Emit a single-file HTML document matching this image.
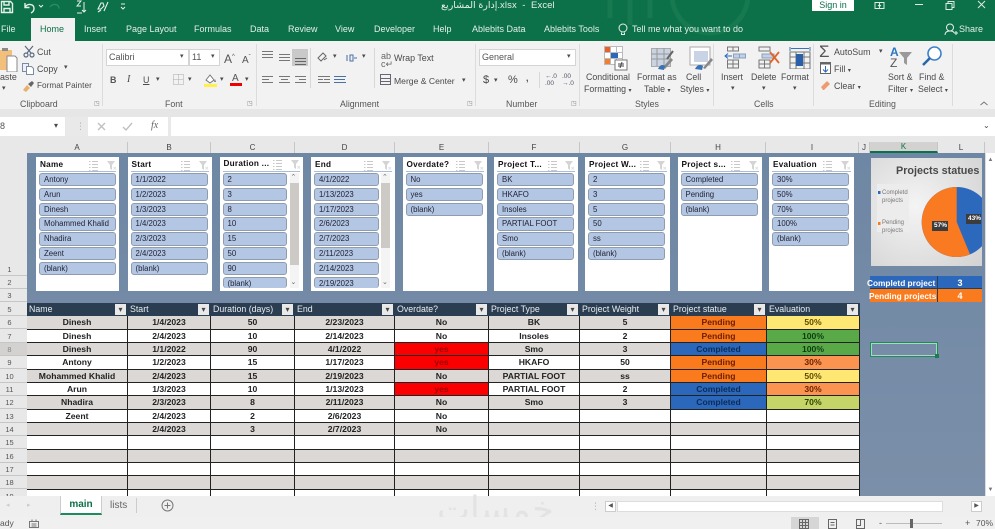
<!DOCTYPE html>
<html><head><meta charset="utf-8">
<style>
html,body{margin:0;padding:0;width:995px;height:529px;overflow:hidden;background:#f0f0f0}
body{position:relative;font-family:"Liberation Sans","DejaVu Sans",sans-serif;font-size:9px;color:#444}
.a{position:absolute;white-space:nowrap}
.t{position:absolute;white-space:nowrap;color:#4a4a4a;line-height:12px;font-size:8.900px}
.tab{position:absolute;top:23px;color:#e2efe9;font-size:9px;line-height:13px;white-space:nowrap}
.sep{position:absolute;top:44px;width:1px;height:62px;background:#dcdcdc}
.gl{position:absolute;top:98px;color:#555;font-size:8.800px;line-height:12px;white-space:nowrap}
.box{position:absolute;background:#fff;border:1px solid #d4d4d4;box-sizing:border-box}
.ch{position:absolute;top:142px;height:11px;font-size:8px;line-height:11px;color:#444;text-align:center;border-right:1px solid #c6c6c6;box-sizing:border-box}
.rh{position:absolute;left:0;width:27px;height:13px;font-size:7.500px;line-height:13px;text-align:center;color:#555;border-bottom:1px solid #c6c6c6;box-sizing:border-box;padding-right:8px}
.sl{position:absolute;top:157px;height:134px;background:#fff;box-sizing:border-box}
.sh{position:absolute;left:4px;top:2px;font-weight:bold;font-size:8.200px;letter-spacing:.25px;color:#111;line-height:12px;white-space:nowrap}
.sl:before{content:"";position:absolute;left:3px;right:3px;top:14px;height:1px;background:#a9bdd6}
.si{position:absolute;left:3px;height:13.400px;background:#b3c7e4;border:1px solid #8f9cad;border-radius:3px;box-sizing:border-box;font-size:7.800px;line-height:12px;color:#223;padding-left:4px;white-space:nowrap;overflow:hidden}
.ic{position:absolute;top:3px}
#g{position:absolute;left:27px;top:303px;display:grid;grid-template-columns:101px 83px 84px 100px 94px 91px 91px 96px 93px;grid-auto-rows:13.330px;width:833px;height:193px;overflow:hidden}
#g div{box-sizing:border-box;border-right:1px solid #222;border-bottom:1px solid #222;text-align:center;font-weight:bold;font-size:8.600px;line-height:12.500px;color:#222;background:#fff;overflow:hidden;white-space:nowrap}
#g .h{background:#2b3d50;color:#e8edf2;text-align:left;padding-left:2px;position:relative;border-right:1px solid #2b3d50;border-bottom:0;font-size:8.800px;font-weight:normal}
#g .h:after{content:"▾";position:absolute;right:1px;top:1px;width:11px;height:11px;background:#e9e9e9;color:#444;font-size:8px;line-height:11px;text-align:center}
#g .g{background:#dbd8d5}
#g .rd{background:#fb0000;color:#9c0000}
#g .p{background:#fa7a1e;color:#6a1d00}
#g .c{background:#2b67bb;color:#0c2c55}
#g .e5{background:#fee873;color:#5e4a00}
#g .e1{background:#5aa949;color:#0d3d0d}
#g .e3{background:#fb9450;color:#6b2200}
#g .e7{background:#c5d567;color:#2e4400}
</style></head><body>
<svg width="0" height="0" style="position:absolute"><defs>
<g id="li" fill="none" stroke="#c8c8c8" stroke-width="1"><path d="M4 1.500h6M4 4.500h6M4 7.500h6M4 10.500h6M1 1.500h1.500M1 4.500h1.500M1 7.500h1.500M1 10.500h1.500"/></g>
<g id="fu"><path d="M1 1h8L6 5v5L4 8.500V5Z" fill="#d4d4d4"/><path d="M7.500 7l2.500 2.500M10 7l-2.500 2.500" stroke="#e2e2e2"/></g>
</defs></svg>

<!-- Title bar -->
<div class="a" style="left:0;top:0;width:995px;height:41px;background:#0c7049"></div>
<svg class="a" style="left:590px;top:0" width="210" height="41"><g fill="none" stroke="#16794f" stroke-width="5"><circle cx="120" cy="-5" r="38"/><path d="M20 0v18M40 0v25M60 0v18"/></g></svg>
<svg class="a" style="left:0;top:0" width="135" height="16" fill="none" stroke="#e6f0eb" stroke-width="1.400"><path d="M1.500 1.500h9l2 2v9h-11zM4 1.500v3.500h5v-3.500M4 12.500v-4h6v4"/><path d="M25 7c3-4 9-3 9 1.500 0 2-1 3.500-3 4.500M25 3v4.500h4.500"/><path d="M39 5l2 2 2-2" stroke-width="1"/><path d="M50 7c3-4 9-3 9 1.500" stroke="#2f8a66"/><path d="M77 1h4l-4 5h4M77 13h5" stroke-width="1"/><path d="M84 2v10M82 10l2 2 2-2" stroke-width="1"/><path d="M98 9l3-6h2l1 3-3 3zM98 12l3-2M108 2l-4 9" stroke-width="1.100"/><path d="M121 4h4M121 7l2 2 2-2" stroke-width="1"/></svg>
<div class="a" style="left:441px;top:0;color:#e6f0eb;font-size:9.500px;line-height:11px;letter-spacing:.1px">إدارة المشاريع.xlsx &nbsp;-&nbsp; Excel</div>
<div class="a" style="left:812px;top:0;width:42px;height:11px;background:#fff;color:#0c7049;font-size:9px;line-height:10px;text-align:center">Sign in</div>
<svg class="a" style="left:870px;top:0" width="125" height="12" fill="none" stroke="#dcebe4"><path d="M5 2.500h9v6h-9zM9.500 2.500v6M8 5l1.500 1.500L11 5"/><path d="M45 4.500h8"/><path d="M76 3.500h6v6h-6zM78 3.500v-2h6v6h-2"/><path d="M108 1l7 7M115 1l-7 7"/></svg>

<!-- Tabs -->
<div class="a" style="left:31px;top:18px;width:44px;height:24px;background:#f1f1f1"></div>
<div class="tab" style="left:1px">File</div>
<div class="tab" style="left:40px;color:#0c7049">Home</div>
<div class="tab" style="left:84px">Insert</div>
<div class="tab" style="left:126px">Page Layout</div>
<div class="tab" style="left:194px">Formulas</div>
<div class="tab" style="left:250px">Data</div>
<div class="tab" style="left:288px">Review</div>
<div class="tab" style="left:335px">View</div>
<div class="tab" style="left:374px">Developer</div>
<div class="tab" style="left:433px">Help</div>
<div class="tab" style="left:472px">Ablebits Data</div>
<div class="tab" style="left:544px">Ablebits Tools</div>
<svg class="a" style="left:617px;top:23px" width="12" height="13" fill="none" stroke="#e6f0eb"><circle cx="6" cy="5" r="4"/><path d="M4.500 9.500v2h3v-2"/></svg>
<div class="tab" style="left:632px">Tell me what you want to do</div>
<svg class="a" style="left:944px;top:23px" width="14" height="13" fill="none" stroke="#e6f0eb"><circle cx="6" cy="4.500" r="3.500"/><path d="M1 12c0-3 2-4 5-4s4 1 4 2M10 10h4M12 8v4"/></svg>
<div class="tab" style="left:959px">Share</div>

<!-- Ribbon -->
<div class="a" style="left:0;top:41px;width:995px;height:68px;background:#f2f2f2"></div>
<div class="a" style="left:0;top:109px;width:995px;height:8px;background:#e6e6e6"></div>
<div class="sep" style="left:102px"></div><div class="sep" style="left:256px"></div><div class="sep" style="left:475px"></div><div class="sep" style="left:579px"></div><div class="sep" style="left:713px"></div><div class="sep" style="left:813px"></div><div class="sep" style="left:952px"></div>

<!-- Clipboard -->
<svg class="a" style="left:0;top:46px" width="18" height="26"><path d="M0 4h12v20H0z" fill="#f3c07c"/><path d="M7 10h8l2 2v14H7z" fill="#fff" stroke="#888"/><path d="M2 2h6v3H2z" fill="#8a8a8a"/></svg>
<div class="t" style="left:0;top:71px">aste</div><div class="t" style="left:2px;top:83px;font-size:7px">▾</div>
<svg class="a" style="left:23px;top:45px" width="12" height="13" fill="none" stroke="#5a6a80" stroke-width="1.200"><path d="M2 1l6 7M10 1L4 8"/><circle cx="3" cy="10" r="2"/><circle cx="9" cy="10" r="2"/></svg>
<div class="t" style="left:37px;top:46px">Cut</div>
<svg class="a" style="left:22px;top:63px" width="13" height="12" fill="#eef" stroke="#7b8ba0"><path d="M.5.500h6v8h-6z"/><path d="M4.500 3.500h5l2 2v6h-7z" fill="#fff"/></svg>
<div class="t" style="left:37px;top:63px">Copy</div><div class="t" style="left:64px;top:62px;font-size:7px">▾</div>
<svg class="a" style="left:22px;top:80px" width="13" height="12"><path d="M1 10l4-5 3 3-4 4z" fill="#e8b06a"/><path d="M6 4l4-3 2 2-3 4z" fill="#666"/></svg>
<div class="t" style="left:37px;top:80px;font-size:8.200px;letter-spacing:.05px">Format Painter</div>
<div class="gl" style="left:20px">Clipboard</div>

<!-- Font -->
<div class="box" style="left:106px;top:49px;width:83px;height:17px;padding-left:2px;line-height:15px;font-size:9px;color:#555">Calibri</div><div class="t" style="left:180px;top:51px;font-size:7px">▾</div>
<div class="box" style="left:189px;top:49px;width:31px;height:17px;padding-left:2px;line-height:15px;font-size:9px;color:#555">11</div><div class="t" style="left:211px;top:51px;font-size:7px">▾</div>
<div class="t" style="left:224px;top:51px;font-size:12px;color:#555">A<span style="font-size:6px;vertical-align:5px">^</span></div>
<div class="t" style="left:242px;top:52px;font-size:10px;color:#555">A<span style="font-size:6px;vertical-align:4px">ˇ</span></div>
<div class="t" style="left:110px;top:74px;font-weight:bold;color:#555">B</div>
<div class="t" style="left:127px;top:74px;font-style:italic;font-family:'Liberation Serif',serif;font-size:10px">I</div>
<div class="t" style="left:143px;top:74px;text-decoration:underline">U</div><div class="t" style="left:156px;top:74px;font-size:7px">▾</div>
<svg class="a" style="left:173px;top:74px" width="12" height="12" fill="none" stroke="#aaa" stroke-dasharray="1 1"><path d="M.5.500h10v10H.500zM5.500.500v10M.5 5.500h10"/></svg><div class="t" style="left:188px;top:74px;font-size:7px">▾</div>
<svg class="a" style="left:203px;top:73px" width="15" height="15"><path d="M3 7l4-5 4 5-4 3z" fill="#fff" stroke="#777"/><path d="M12 6l1 3h-2z" fill="#777"/><rect x="1" y="11" width="13" height="3" fill="#fff04a"/></svg><div class="t" style="left:220px;top:74px;font-size:7px">▾</div>
<div class="t" style="left:232px;top:73px;font-size:10px;color:#555">A</div><div class="a" style="left:230px;top:83px;width:12px;height:3px;background:#ee0000"></div><div class="t" style="left:245px;top:74px;font-size:7px">▾</div>
<div class="gl" style="left:165px">Font</div>
<div class="t" style="left:94px;top:98px;font-size:6px;color:#888">◳</div><div class="t" style="left:247px;top:98px;font-size:6px;color:#888">◳</div><div class="t" style="left:467px;top:98px;font-size:6px;color:#888">◳</div><div class="t" style="left:571px;top:98px;font-size:6px;color:#888">◳</div>

<!-- Alignment -->
<div class="a" style="left:292px;top:49px;width:16px;height:17px;background:#c9c9c9"></div>
<svg class="a" style="left:262px;top:50px" width="112" height="36" fill="none" stroke="#777"><path d="M0 1.500h11M0 4.500h11M0 7.500h11"/><path d="M17 4.500h11M17 7.500h11M17 10.500h11"/><path d="M33 8.500h11M33 11.500h11M33 14.500h11" stroke="#666"/><path d="M56 8l5-5 3 3-5 5zM62 10l3-2" stroke="#666"/><path d="M88 5h3v6h-3zM85 5v6M92 8h3" stroke="#4a6fa0"/><path d="M0 26.500h11M0 29.500h7M0 32.500h11"/><path d="M17 26.500h11M19 29.500h7M17 32.500h11"/><path d="M33 26.500h11M37 29.500h7M33 32.500h11"/><path d="M56 26.500h12M62 29.500h6M56 32.500h12M61 29.500h-5"/><path d="M72 26.500h12M72 32.500h12M72 29.500h6M78 29.500h5" stroke="#4a6fa0"/></svg>
<div class="t" style="left:333px;top:51px;font-size:7px">▾</div><div class="t" style="left:362px;top:51px;font-size:7px">▾</div>
<div class="a" style="left:310px;top:48px;width:1px;height:40px;background:#d8d8d8"></div><div class="a" style="left:374px;top:48px;width:1px;height:40px;background:#d8d8d8"></div>
<div class="t" style="left:381px;top:52px;font-size:9px;color:#666;line-height:8px">ab<br>c↵</div>
<div class="t" style="left:394px;top:52px">Wrap Text</div>
<svg class="a" style="left:380px;top:74px" width="12" height="12" fill="none" stroke="#667"><path d="M.5.500h10v10H.500zM.5 4.500h10M.5 7.500h10"/></svg>
<div class="t" style="left:394px;top:75px;font-size:8.600px">Merge &amp; Center</div><div class="t" style="left:462px;top:75px;font-size:7px">▾</div>
<div class="gl" style="left:340px">Alignment</div>

<!-- Number -->
<div class="box" style="left:479px;top:49px;width:97px;height:17px;padding-left:2px;line-height:15px;font-size:9px;color:#555">General</div><div class="t" style="left:567px;top:51px;font-size:7px">▾</div>
<div class="t" style="left:483px;top:74px;font-size:11px">$</div><div class="t" style="left:494px;top:75px;font-size:7px">▾</div>
<div class="t" style="left:508px;top:74px;font-size:11px">%</div><div class="t" style="left:526px;top:72px;font-weight:bold">,</div>
<div class="a" style="left:539px;top:72px;width:1px;height:16px;background:#d8d8d8"></div>
<div class="t" style="left:545px;top:74px;font-size:6.500px;line-height:6.500px;color:#556">←.0<br>.00</div><div class="t" style="left:562px;top:74px;font-size:6.500px;line-height:6.500px;color:#556">.00<br>→.0</div>
<div class="gl" style="left:506px">Number</div>

<!-- Styles -->
<svg class="a" style="left:598px;top:45px" width="118" height="27"><g fill="#fff" stroke="#bbb"><path d="M6.500 1.500h18v18h-18z"/><path d="M6.500 7.500h18M6.500 13.500h18M12.500 1.500v18M18.500 1.500v18" fill="none"/></g><path d="M7 2h5v5H7z" fill="#e5622a"/><path d="M13 8h7v5h-7z" fill="#2b67bb"/><path d="M7 14h5v5H7z" fill="#f08030"/><rect x="17" y="15" width="12" height="10" fill="#fff" stroke="#777"/><path d="M20 19h6M20 21h6M24 17l-2 6" stroke="#444" fill="none"/><g fill="#c9d3e2" stroke="#aaa"><path d="M53.500 3.500h19v18h-19z"/></g><path d="M53 9h19M53 14h19M59 3v18M66 3v18" stroke="#999" fill="none"/><path d="M65 22l8-9 2 2-8 9z" fill="#888"/><path d="M60 24c2-4 4-5 7-3l-1 4z" fill="#3a72b8"/><path d="M75 6l-6 8" stroke="#666" stroke-width="2"/><rect x="92" y="2" width="20" height="18" fill="#fff" stroke="#aaa"/><rect x="96" y="6" width="14" height="11" fill="#c8d3e6"/><path d="M105 23l8-10 2 2-8 9z" fill="#888"/><path d="M97 24c2-4 5-5 8-3l-1 4z" fill="#3a72b8"/></svg>
<div class="t" style="left:586px;top:71px;font-size:8.800px">Conditional</div><div class="t" style="left:584px;top:83px;font-size:8.800px">Formatting <span style="font-size:6px">▾</span></div>
<div class="t" style="left:637px;top:71px;font-size:8.800px">Format as</div><div class="t" style="left:644px;top:83px;font-size:8.800px">Table <span style="font-size:6px">▾</span></div>
<div class="t" style="left:686px;top:71px;font-size:8.800px">Cell</div><div class="t" style="left:680px;top:83px;font-size:8.800px">Styles <span style="font-size:6px">▾</span></div>
<div class="gl" style="left:635px">Styles</div>

<!-- Cells -->
<svg class="a" style="left:720px;top:45px" width="92" height="24" fill="none" stroke="#777"><path d="M7.500 2h11v4h-11zM13 2v4M7.500 15h11v8h-11zM13 15v8M7.500 19h11"/><path d="M13.500 9h12v4h-12zM19.500 9v4" stroke="#8aa0bf" fill="#c4d1e5"/><path d="M12 11H5M8 8.500 5 11l3 2.500" stroke="#2b67bb"/><path d="M39 2h11v4H39zM39 15h11v8H39zM44.500 15v8M39 19h11"/><path d="M42 9h12v4H42z" fill="#c4d1e5" stroke="#8aa0bf"/><path d="M50 7l9 11M59 7l-9 11" stroke="#e0662a" stroke-width="1.800"/><path d="M70 7h20v17H70zM70 12h20M70 18h20M76 7v17M84 7v17"/><path d="M76 9h7v12h-7z" fill="#2b5fa8" stroke="none"/><path d="M70 2v4M90 2v4M71 3.500h18" stroke="#3a72b8"/></svg>
<div class="t" style="left:721px;top:71px;font-size:8.800px">Insert</div><div class="t" style="left:731px;top:83px;font-size:7px">▾</div>
<div class="t" style="left:751px;top:71px;font-size:8.800px">Delete</div><div class="t" style="left:762px;top:83px;font-size:7px">▾</div>
<div class="t" style="left:781px;top:71px;font-size:8.800px">Format</div><div class="t" style="left:793px;top:83px;font-size:7px">▾</div>
<div class="gl" style="left:754px">Cells</div>

<!-- Editing -->
<div class="t" style="left:819px;top:43px;font-size:17px;line-height:18px;color:#555">Σ</div>
<div class="t" style="left:834px;top:46px">AutoSum</div><div class="t" style="left:879px;top:46px;font-size:7px">▾</div>
<svg class="a" style="left:820px;top:62px" width="12" height="13"><rect x=".5" y=".5" width="10" height="11" fill="#fff" stroke="#666"/><path d="M.5.500h10v2h-10z" fill="#666"/><path d="M5.500 4v6M3 7.500l2.500 2.500L8 7.500" stroke="#2b67bb" fill="none"/></svg>
<div class="t" style="left:834px;top:63px">Fill <span style="font-size:6px">▾</span></div>
<svg class="a" style="left:820px;top:79px" width="12" height="12"><path d="M1 8l6-6 3 3-6 6H3z" fill="#f09a70"/></svg>
<div class="t" style="left:834px;top:80px">Clear <span style="font-size:6px">▾</span></div>
<div class="t" style="left:890px;top:46px;font-size:12px;color:#2b77c0;font-weight:bold">A</div><div class="t" style="left:890px;top:57px;font-size:12px;color:#555">Z</div>
<svg class="a" style="left:899px;top:52px" width="14" height="14"><path d="M0 0h13L8 6v7L5 11V6z" fill="#999"/></svg>
<svg class="a" style="left:921px;top:45px" width="22" height="22" fill="none"><circle cx="13.500" cy="8.500" r="6.500" stroke="#3a80c8" stroke-width="1.600" fill="#fff"/><path d="M9 13l-7 7" stroke="#2b67a8" stroke-width="2.600"/></svg>
<div class="t" style="left:888px;top:71px;font-size:8.800px">Sort &amp;</div><div class="t" style="left:888px;top:83px;font-size:8.800px">Filter <span style="font-size:6px">▾</span></div>
<div class="t" style="left:919px;top:71px;font-size:8.800px">Find &amp;</div><div class="t" style="left:918px;top:83px;font-size:8.800px">Select <span style="font-size:6px">▾</span></div>
<div class="gl" style="left:869px">Editing</div>
<svg class="a" style="left:979px;top:100px" width="10" height="6" fill="none" stroke="#777"><path d="M1.500 5l3.500-3 3.500 3"/></svg>

<!-- Formula bar -->
<div class="a" style="left:0;top:117px;width:995px;height:19px;background:#e9e9e9"></div>
<div class="box" style="left:0;top:117px;width:65px;height:19px;border:0;color:#555;line-height:19px;font-size:9px">8</div><div class="t" style="left:54px;top:120px;font-size:8px">▾</div>
<div class="t" style="left:76px;top:120px;color:#aaa">⋮</div>
<div class="box" style="left:88px;top:117px;width:80px;height:19px;border:0"></div>
<svg class="a" style="left:95px;top:121px" width="40" height="11" fill="none" stroke="#c0c0c0" stroke-width="1.400"><path d="M3 2l7 7M10 2l-7 7M28 6l3 3 6-7"/></svg>
<div class="t" style="left:151px;top:120px;font-style:italic;font-family:'Liberation Serif',serif;font-size:10px;color:#666">fx</div>
<div class="box" style="left:171px;top:117px;width:824px;height:19px;border:0"></div>
<div class="t" style="left:983px;top:120px;font-size:8px">⌄</div>

<!-- Column headers -->
<div class="a" style="left:0;top:136px;width:995px;height:17px;background:#e8e8e8"></div>
<div class="ch" style="left:27px;width:101px">A</div><div class="ch" style="left:128px;width:83px">B</div><div class="ch" style="left:211px;width:84px">C</div><div class="ch" style="left:295px;width:100px">D</div><div class="ch" style="left:395px;width:94px">E</div><div class="ch" style="left:489px;width:91px">F</div><div class="ch" style="left:580px;width:91px">G</div><div class="ch" style="left:671px;width:95px">H</div><div class="ch" style="left:766px;width:93px">I</div><div class="ch" style="left:859px;width:11px">J</div>
<div class="ch" style="left:870px;width:68px;background:#d4d2d0;border-bottom:2px solid #0c7049;color:#0c7049;height:11px;line-height:9px">K</div><div class="ch" style="left:938px;width:47px">L</div>

<!-- Row headers -->
<div class="a" style="left:0;top:153px;width:27px;height:343px;background:#e8e8e8"></div>
<div class="rh" style="top:263px">1</div><div class="rh" style="top:276px">2</div><div class="rh" style="top:289px">3</div><div class="rh" style="top:303px">5</div>
<div class="rh" style="top:316px">6</div><div class="rh" style="top:329.500px">7</div><div class="rh" style="top:343px;background:#d4d2d0;color:#888">8</div><div class="rh" style="top:356px">9</div><div class="rh" style="top:369.500px">10</div><div class="rh" style="top:383px">11</div><div class="rh" style="top:396px">12</div><div class="rh" style="top:409.500px">13</div><div class="rh" style="top:423px">14</div><div class="rh" style="top:436px">15</div><div class="rh" style="top:449.500px">16</div><div class="rh" style="top:463px">17</div><div class="rh" style="top:476px">18</div><div class="rh" style="top:489.500px;height:7px">19</div>

<!-- Sheet bg -->
<div class="a" style="left:27px;top:153px;width:958px;height:343px;background:linear-gradient(#6e87a4,#7b8fa9)"></div>

<!-- Slicers -->
<div class="sl" style="left:36px;width:83px"><div class="sh">Name</div><svg class="ic" style="left:52px" width="13" height="12"><use href="#li"/></svg><svg class="ic" style="left:70px" width="12" height="12"><use href="#fu"/></svg>
<div class="si" style="top:16px;width:77px">Antony</div><div class="si" style="top:30.800px;width:77px">Arun</div><div class="si" style="top:45.600px;width:77px">Dinesh</div><div class="si" style="top:60.400px;width:77px">Mohammed Khalid</div><div class="si" style="top:75.200px;width:77px">Nhadira</div><div class="si" style="top:90px;width:77px">Zeent</div><div class="si" style="top:104.800px;width:77px">(blank)</div></div>

<div class="sl" style="left:127.500px;width:84px"><div class="sh">Start</div><svg class="ic" style="left:52px" width="13" height="12"><use href="#li"/></svg><svg class="ic" style="left:70px" width="12" height="12"><use href="#fu"/></svg>
<div class="si" style="top:16px;width:77px">1/1/2022</div><div class="si" style="top:30.800px;width:77px">1/2/2023</div><div class="si" style="top:45.600px;width:77px">1/3/2023</div><div class="si" style="top:60.400px;width:77px">1/4/2023</div><div class="si" style="top:75.200px;width:77px">2/3/2023</div><div class="si" style="top:90px;width:77px">2/4/2023</div><div class="si" style="top:104.800px;width:77px">(blank)</div></div>

<div class="sl" style="left:219.500px;width:83px"><div class="sh" style="top:1px">Duration ...</div><svg class="ic" style="left:52px;top:2px" width="13" height="12"><use href="#li"/></svg><svg class="ic" style="left:70px;top:2px" width="12" height="12"><use href="#fu"/></svg>
<div class="si" style="top:16px;width:64px">2</div><div class="si" style="top:30.800px;width:64px">3</div><div class="si" style="top:45.600px;width:64px">8</div><div class="si" style="top:60.400px;width:64px">10</div><div class="si" style="top:75.200px;width:64px">15</div><div class="si" style="top:90px;width:64px">50</div><div class="si" style="top:104.800px;width:64px">90</div><div class="si" style="top:119.600px;width:64px;height:11.400px;border-bottom:0">(blank)</div>
<div class="a" style="left:70px;top:16px;width:9px;height:115px;background:#f4f4f4"></div><div class="a" style="left:70px;top:26px;width:9px;height:82px;background:#cdcac5"></div><div class="a" style="left:71px;top:16px;font-size:7px;color:#666;line-height:9px">⌃</div><div class="a" style="left:71px;top:121px;font-size:7px;color:#666;line-height:9px">⌄</div></div>

<div class="sl" style="left:311px;width:84px"><div class="sh">End</div><svg class="ic" style="left:52px" width="13" height="12"><use href="#li"/></svg><svg class="ic" style="left:70px" width="12" height="12"><use href="#fu"/></svg>
<div class="si" style="top:16px;width:65px">4/1/2022</div><div class="si" style="top:30.800px;width:65px">1/13/2023</div><div class="si" style="top:45.600px;width:65px">1/17/2023</div><div class="si" style="top:60.400px;width:65px">2/6/2023</div><div class="si" style="top:75.200px;width:65px">2/7/2023</div><div class="si" style="top:90px;width:65px">2/11/2023</div><div class="si" style="top:104.800px;width:65px">2/14/2023</div><div class="si" style="top:119.600px;width:65px;height:11.400px;border-bottom:0">2/19/2023</div>
<div class="a" style="left:70px;top:16px;width:9px;height:115px;background:#f4f4f4"></div><div class="a" style="left:70px;top:26px;width:9px;height:65px;background:#cdcac5"></div><div class="a" style="left:71px;top:16px;font-size:7px;color:#666;line-height:9px">⌃</div><div class="a" style="left:71px;top:121px;font-size:7px;color:#666;line-height:9px">⌄</div></div>

<div class="sl" style="left:402.500px;width:84px"><div class="sh">Overdate?</div><svg class="ic" style="left:52px" width="13" height="12"><use href="#li"/></svg><svg class="ic" style="left:70px" width="12" height="12"><use href="#fu"/></svg>
<div class="si" style="top:16px;width:77px">No</div><div class="si" style="top:30.800px;width:77px">yes</div><div class="si" style="top:45.600px;width:77px">(blank)</div></div>

<div class="sl" style="left:494px;width:84px"><div class="sh">Project T...</div><svg class="ic" style="left:53px" width="13" height="12"><use href="#li"/></svg><svg class="ic" style="left:70px" width="12" height="12"><use href="#fu"/></svg>
<div class="si" style="top:16px;width:77px">BK</div><div class="si" style="top:30.800px;width:77px">HKAFO</div><div class="si" style="top:45.600px;width:77px">Insoles</div><div class="si" style="top:60.400px;width:77px">PARTIAL FOOT</div><div class="si" style="top:75.200px;width:77px">Smo</div><div class="si" style="top:90px;width:77px">(blank)</div></div>

<div class="sl" style="left:585px;width:85px"><div class="sh">Project W...</div><svg class="ic" style="left:54px" width="13" height="12"><use href="#li"/></svg><svg class="ic" style="left:71px" width="12" height="12"><use href="#fu"/></svg>
<div class="si" style="top:16px;width:77px">2</div><div class="si" style="top:30.800px;width:77px">3</div><div class="si" style="top:45.600px;width:77px">5</div><div class="si" style="top:60.400px;width:77px">50</div><div class="si" style="top:75.200px;width:77px">ss</div><div class="si" style="top:90px;width:77px">(blank)</div></div>

<div class="sl" style="left:677.500px;width:84px"><div class="sh">Project s...</div><svg class="ic" style="left:52px" width="13" height="12"><use href="#li"/></svg><svg class="ic" style="left:70px" width="12" height="12"><use href="#fu"/></svg>
<div class="si" style="top:16px;width:77px">Completed</div><div class="si" style="top:30.800px;width:77px">Pending</div><div class="si" style="top:45.600px;width:77px">(blank)</div></div>

<div class="sl" style="left:769px;width:85px"><div class="sh">Evaluation</div><svg class="ic" style="left:53px" width="13" height="12"><use href="#li"/></svg><svg class="ic" style="left:71px" width="12" height="12"><use href="#fu"/></svg>
<div class="si" style="top:16px;width:77px">30%</div><div class="si" style="top:30.800px;width:77px">50%</div><div class="si" style="top:45.600px;width:77px">70%</div><div class="si" style="top:60.400px;width:77px">100%</div><div class="si" style="top:75.200px;width:77px">(blank)</div></div>

<!-- Chart -->
<div class="a" style="left:871px;top:158px;width:111px;height:108px;overflow:hidden;background:radial-gradient(circle at 40% 45%,#f4f4f4,#d2d2d2)">
<div class="a" style="left:25px;top:6px;font-weight:bold;font-size:10.800px;color:#4a4a4a;line-height:15px">Projects statues</div>
<svg class="a" style="left:0;top:0" width="111" height="108"><rect x="6" y="26" width="32" height="48" fill="#ececec"/><circle cx="85.700" cy="64" r="35" fill="#2c68bc"/><path d="M85.700 64 L85.700 29 A35 35 0 1 0 99 96.400 Z" fill="#f97a20"/><rect x="61" y="63" width="16" height="10" fill="#3c3c3c"/><rect x="95" y="56" width="15" height="10" fill="#3c3c3c"/><rect x="7" y="33" width="2.500" height="3" fill="#2c68bc"/><rect x="7" y="64" width="2.500" height="3" fill="#f97a20"/></svg>
<div class="a" style="left:63px;top:63px;color:#fff;font-size:6.500px;font-weight:bold;line-height:10px">57%</div>
<div class="a" style="left:97px;top:56px;color:#fff;font-size:6.500px;font-weight:bold;line-height:10px">43%</div>
<div class="a" style="left:11px;top:31px;font-size:6px;line-height:8px;color:#777">Completd<br>projects</div>
<div class="a" style="left:11px;top:61px;font-size:6px;line-height:8px;color:#777">Pending<br>projects</div>
</div>

<!-- Mini table -->
<div class="a" style="left:870px;top:276px;width:112px;height:13px;background:#2b67bb;border-bottom:1px solid #2b3d50;box-sizing:border-box"></div>
<div class="a" style="left:870px;top:289px;width:112px;height:13px;background:#fa7a1e"></div>
<div class="a" style="left:937px;top:276px;width:1px;height:26px;background:#2b3d50"></div>
<div class="a" style="left:867px;top:277px;width:70px;overflow:hidden;color:#fff;font-weight:bold;font-size:8.300px;line-height:12px">Completd project</div>
<div class="a" style="left:869px;top:290px;width:68px;overflow:hidden;color:#fff;font-weight:bold;font-size:8.300px;line-height:12px">Pending projects</div>
<div class="a" style="left:938px;top:277px;width:44px;text-align:center;color:#fff;font-weight:bold;font-size:9px;line-height:12px">3</div>
<div class="a" style="left:938px;top:290px;width:44px;text-align:center;color:#fff;font-weight:bold;font-size:9px;line-height:12px">4</div>

<!-- Data table -->
<div id="g">
<div class="h">Name</div><div class="h">Start</div><div class="h">Duration (days)</div><div class="h">End</div><div class="h">Overdate?</div><div class="h">Project Type</div><div class="h">Project Weight</div><div class="h">Project statue</div><div class="h">Evaluation</div>
<div class="g">Dinesh</div><div class="g">1/4/2023</div><div class="g">50</div><div class="g">2/23/2023</div><div class="g">No</div><div class="g">BK</div><div class="g">5</div><div class="p">Pending</div><div class="e5">50%</div>
<div>Dinesh</div><div>2/4/2023</div><div>10</div><div>2/14/2023</div><div>No</div><div>Insoles</div><div>2</div><div class="p">Pending</div><div class="e1">100%</div>
<div class="g">Dinesh</div><div class="g">1/1/2022</div><div class="g">90</div><div class="g">4/1/2022</div><div class="rd">yes</div><div class="g">Smo</div><div class="g">3</div><div class="c">Completed</div><div class="e1">100%</div>
<div>Antony</div><div>1/2/2023</div><div>15</div><div>1/17/2023</div><div class="rd">yes</div><div>HKAFO</div><div>50</div><div class="p">Pending</div><div class="e3">30%</div>
<div class="g">Mohammed Khalid</div><div class="g">2/4/2023</div><div class="g">15</div><div class="g">2/19/2023</div><div class="g">No</div><div class="g">PARTIAL FOOT</div><div class="g">ss</div><div class="p">Pending</div><div class="e5">50%</div>
<div>Arun</div><div>1/3/2023</div><div>10</div><div>1/13/2023</div><div class="rd">yes</div><div>PARTIAL FOOT</div><div>2</div><div class="c">Completed</div><div class="e3">30%</div>
<div class="g">Nhadira</div><div class="g">2/3/2023</div><div class="g">8</div><div class="g">2/11/2023</div><div class="g">No</div><div class="g">Smo</div><div class="g">3</div><div class="c">Completed</div><div class="e7">70%</div>
<div>Zeent</div><div>2/4/2023</div><div>2</div><div>2/6/2023</div><div>No</div><div></div><div></div><div></div><div></div>
<div class="g"></div><div class="g">2/4/2023</div><div class="g">3</div><div class="g">2/7/2023</div><div class="g">No</div><div class="g"></div><div class="g"></div><div class="g"></div><div class="g"></div>
<div></div><div></div><div></div><div></div><div></div><div></div><div></div><div></div><div></div>
<div class="g"></div><div class="g"></div><div class="g"></div><div class="g"></div><div class="g"></div><div class="g"></div><div class="g"></div><div class="g"></div><div class="g"></div>
<div></div><div></div><div></div><div></div><div></div><div></div><div></div><div></div><div></div>
<div class="g"></div><div class="g"></div><div class="g"></div><div class="g"></div><div class="g"></div><div class="g"></div><div class="g"></div><div class="g"></div><div class="g"></div>
<div></div><div></div><div></div><div></div><div></div><div></div><div></div><div></div><div></div>
</div>

<!-- Selected cell -->
<div class="a" style="left:870px;top:342px;width:68px;height:15px;border:1px solid #1f8a5c;box-shadow:inset 0 0 0 1px #a8d8c0;box-sizing:border-box"></div>
<div class="a" style="left:935px;top:354px;width:4px;height:4px;background:#1f7a52"></div>

<!-- Vertical scrollbar -->
<div class="a" style="left:985px;top:153px;width:10px;height:343px;background:#fff;border-left:1px solid #ddd;box-sizing:border-box"></div>
<div class="a" style="left:986px;top:156px;width:9px;font-size:6px;line-height:9px;text-align:center;color:#777">▲</div>
<div class="a" style="left:986px;top:486px;width:9px;font-size:6px;line-height:9px;text-align:center;color:#777">▼</div>

<!-- Sheet tabs -->
<div class="a" style="left:0;top:496px;width:995px;height:21px;background:#efefef"></div>
<div class="a" style="left:437px;top:493px;height:34px;font-family:'DejaVu Sans',sans-serif;font-size:35px;line-height:34px;color:#e3e3e3">خمسات</div>
<div class="t" style="left:6px;top:500px;font-size:7px;color:#ccc">◂</div><div class="t" style="left:27px;top:500px;font-size:7px;color:#ccc">▸</div>
<div class="a" style="left:60px;top:496px;width:42px;height:19px;background:#fff;border-bottom:2px solid #1f8a5c;border-left:1px solid #ccc;border-right:1px solid #ccc;box-sizing:border-box;text-align:center;color:#0c7049;font-weight:bold;font-size:10px;line-height:18px">main</div>
<div class="t" style="left:110px;top:500px;font-size:10px;color:#666">lists</div>
<div class="a" style="left:136px;top:498px;width:1px;height:15px;background:#ccc"></div>
<svg class="a" style="left:161px;top:499px" width="13" height="13" fill="none" stroke="#777"><circle cx="6.500" cy="6.500" r="5.500"/><path d="M3.500 6.500h6M6.500 3.500v6"/></svg>
<div class="t" style="left:591px;top:500px;color:#aaa">⋮</div>
<div class="a" style="left:605px;top:501px;width:11px;height:11px;background:#fff;border:1px solid #ccc;box-sizing:border-box;font-size:6px;line-height:9px;text-align:center;color:#555">◀</div>
<div class="a" style="left:617px;top:501px;width:326px;height:11px;background:#fff;border:1px solid #ddd;box-sizing:border-box"></div>
<div class="a" style="left:971px;top:501px;width:11px;height:11px;background:#fff;border:1px solid #ccc;box-sizing:border-box;font-size:6px;line-height:9px;text-align:center;color:#555">▶</div>

<!-- Status bar -->
<div class="a" style="left:0;top:517px;width:995px;height:12px;background:#f0f0f0"></div>
<div class="t" style="left:0;top:518px;font-size:8.500px;line-height:11px;color:#555">ady</div>
<svg class="a" style="left:29px;top:519px" width="11" height="9" fill="none" stroke="#777"><path d="M.5 2.500h9v6h-9zM3 .5v2M7 .5v2M2.500 5h5M2.500 7h5"/></svg>
<div class="a" style="left:791px;top:517px;width:28px;height:12px;background:#d6d6d6"></div>
<svg class="a" style="left:795px;top:518px" width="95" height="11" fill="none" stroke="#666"><path d="M4.500 1.500h9v9h-9zM4.500 4.500h9M4.500 7.500h9M7.500 1.500v9M10.500 1.500v9"/><path d="M33.500 1.500h8v9h-8zM35.500 4.500h4M35.500 7h4"/><path d="M61.500 1.500h8v9h-8zM61.500 7.500h4v-6"/></svg>
<div class="a" style="left:879px;top:518px;font-size:9px;line-height:10px;color:#555">-</div>
<div class="a" style="left:886px;top:523px;width:56px;height:1px;background:#bbb"></div>
<div class="a" style="left:910px;top:519px;width:3px;height:9px;background:#666"></div>
<div class="a" style="left:965px;top:518px;font-size:9px;line-height:10px;color:#555">+</div>
<div class="a" style="left:976px;top:518px;font-size:8.500px;line-height:11px;color:#555">70%</div>
</body></html>
